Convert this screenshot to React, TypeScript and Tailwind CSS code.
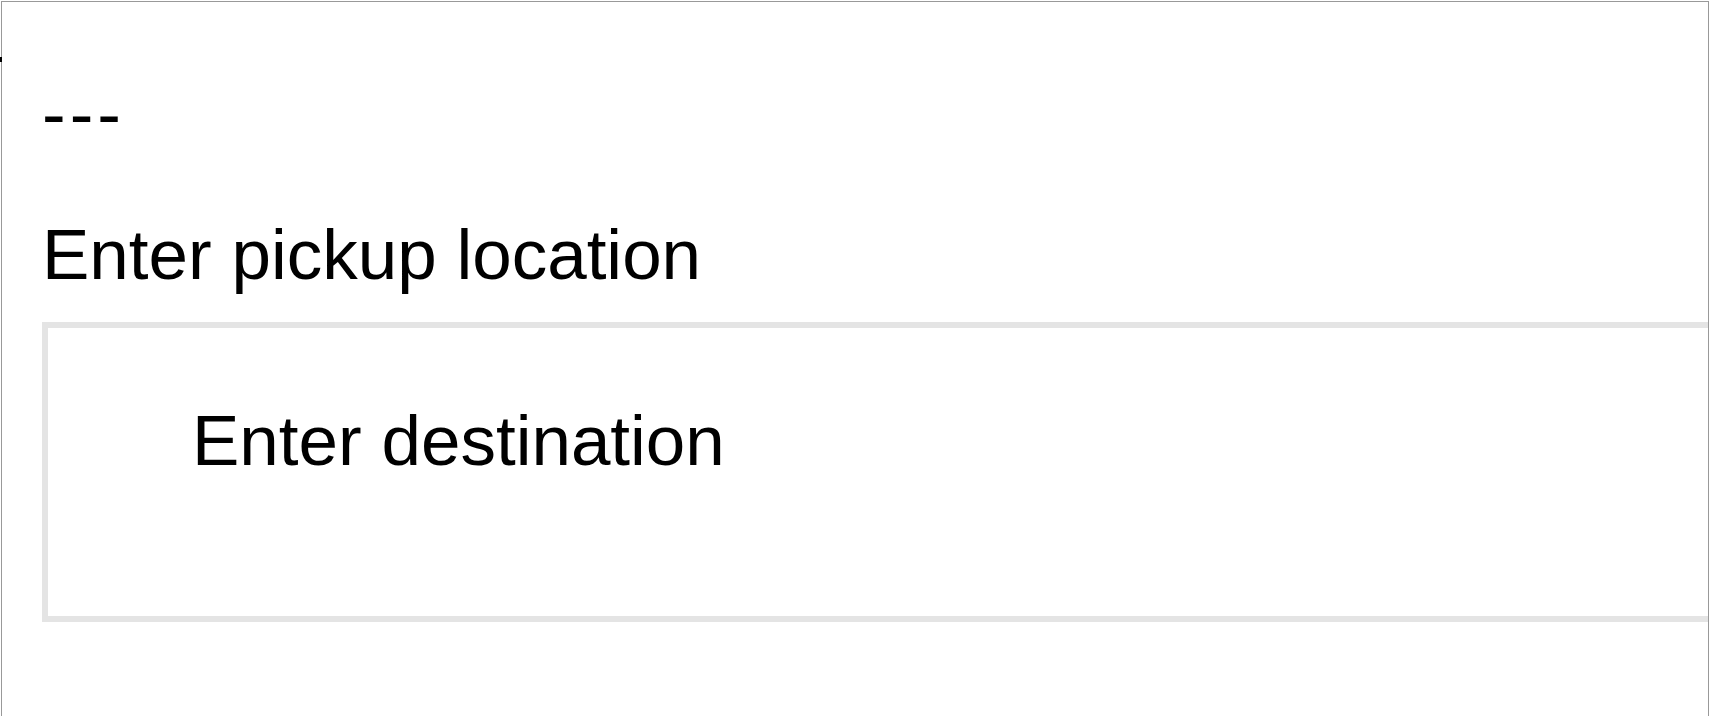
export default function App() {
  return (
    <div className="relative h-[716px] overflow-hidden bg-white">
      {/* little clipped mark on the far left edge */}
      <span className="absolute left-0 top-[57px] h-[5px] w-[2px] bg-black" />

      <div className="ml-[1px] mt-[1px] h-[760px] w-[1708px] overflow-hidden border border-[#999999] font-['Liberation_Sans',Arial,sans-serif] text-[71px] leading-[83px] text-black">
        <div className="pl-[40px] pt-[70px]">
          <p className="tracking-[4px]">---</p>

          <p className="mt-[58px]">Enter pickup location</p>

          <div className="mt-[26px] h-[300px] w-[1800px] border-[6px] border-[#e4e4e4] pl-[144px] pt-[71px]">
            <p>Enter destination</p>
          </div>
        </div>
      </div>
    </div>
  )
}
